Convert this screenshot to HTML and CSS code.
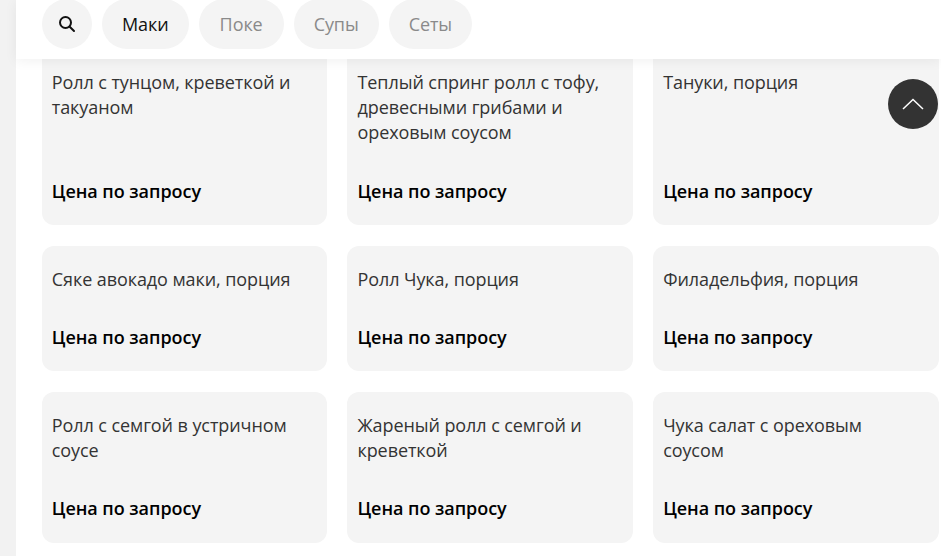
FILE: index.html
```html
<!DOCTYPE html>
<html lang="ru">
<head>
    <meta charset="UTF-8">
    <title>Меню</title>
    <link rel="stylesheet" href="styles.css">
</head>
<body>
    <div class="page">
        <!-- Category bar -->
        <div class="top-bar">
            <button class="pill search-btn" aria-label="Поиск">
                <svg width="18" height="18" viewBox="0 0 18 18" fill="none" stroke="#111" stroke-width="2" stroke-linecap="round">
                    <circle cx="7.5" cy="7.5" r="5.5"/>
                    <path d="M11.7 11.7 16 16"/>
                </svg>
            </button>
            <button class="pill active">Маки</button>
            <button class="pill">Поке</button>
            <button class="pill">Супы</button>
            <button class="pill">Сеты</button>
        </div>

        <!-- Products -->
        <div class="grid">
            <div class="card"><div class="card-name">Ролл с тунцом, креветкой и такуаном</div><div class="card-price">Цена по запросу</div></div>
            <div class="card"><div class="card-name">Теплый спринг ролл с тофу, древесными грибами и ореховым соусом</div><div class="card-price">Цена по запросу</div></div>
            <div class="card"><div class="card-name">Тануки, порция</div><div class="card-price">Цена по запросу</div></div>
            <div class="card"><div class="card-name">Сяке авокадо маки, порция</div><div class="card-price">Цена по запросу</div></div>
            <div class="card"><div class="card-name">Ролл Чука, порция</div><div class="card-price">Цена по запросу</div></div>
            <div class="card"><div class="card-name">Филадельфия, порция</div><div class="card-price">Цена по запросу</div></div>
            <div class="card"><div class="card-name">Ролл с семгой в устричном соусе</div><div class="card-price">Цена по запросу</div></div>
            <div class="card"><div class="card-name">Жареный ролл с семгой и креветкой</div><div class="card-price">Цена по запросу</div></div>
            <div class="card"><div class="card-name">Чука салат с ореховым соусом</div><div class="card-price">Цена по запросу</div></div>
        </div>

        <button class="scroll-top" aria-label="Наверх">
            <svg width="22" height="12" viewBox="0 0 22 12" fill="none" stroke="#fff" stroke-width="1.5">
                <path d="M1 11 11 1.5 21 11"/>
            </svg>
        </button>
    </div>
</body>
</html>
```

FILE: styles.css
```css
html, body {
    height: 100%;
}

body {
    margin: 0;
    background-color: #f2f2f2;
    font-family: "Open Sans", "Noto Sans", sans-serif;
    overflow: hidden;
}

.page {
    margin-left: 16px;
    height: 100%;
    background-color: #fff;
}

.top-bar {
    position: relative;
    z-index: 2;
    display: flex;
    gap: 10px;
    height: 59px;
    padding: 0 26px;
    box-sizing: border-box;
    background-color: #fff;
    box-shadow: 0 2px 12px rgba(0, 0, 0, 0.06);
    overflow: hidden;
}

.pill {
    min-width: 85px;
    height: 50px;
    margin-top: -1px;
    padding: 0 20px;
    border: none;
    border-radius: 25px;
    background-color: #f4f4f4;
    color: #8a8a8a;
    font-family: inherit;
    font-size: 18px;
    letter-spacing: -0.08px;
}

.pill:last-child {
    min-width: 0;
}

.pill.active {
    color: #111;
}

.search-btn {
    min-width: 0;
    width: 50px;
    padding: 0;
    display: flex;
    align-items: center;
    justify-content: center;
}

.grid {
    display: grid;
    grid-template-columns: repeat(3, 1fr);
    column-gap: 20px;
    row-gap: 20.6px;
    margin: -10.4px 2.2px 0 25.8px;
}

.card {
    display: flex;
    flex-direction: column;
    justify-content: space-between;
    padding: 21px 20px 21.4px 10px;
    border-radius: 12px;
    background-color: #f4f4f4;
}

.card-name {
    margin-bottom: 32.8px;
    color: #333;
    font-size: 18px;
    line-height: 25.4px;
    letter-spacing: -0.08px;
}

.card-price {
    color: #000;
    font-size: 18px;
    font-weight: 600;
    line-height: 25px;
    letter-spacing: -0.05px;
}

.scroll-top {
    position: fixed;
    top: 79px;
    left: 888px;
    z-index: 3;
    width: 50px;
    height: 50px;
    padding: 0;
    border: none;
    border-radius: 50%;
    background-color: #333;
    display: flex;
    align-items: center;
    justify-content: center;
}
```
